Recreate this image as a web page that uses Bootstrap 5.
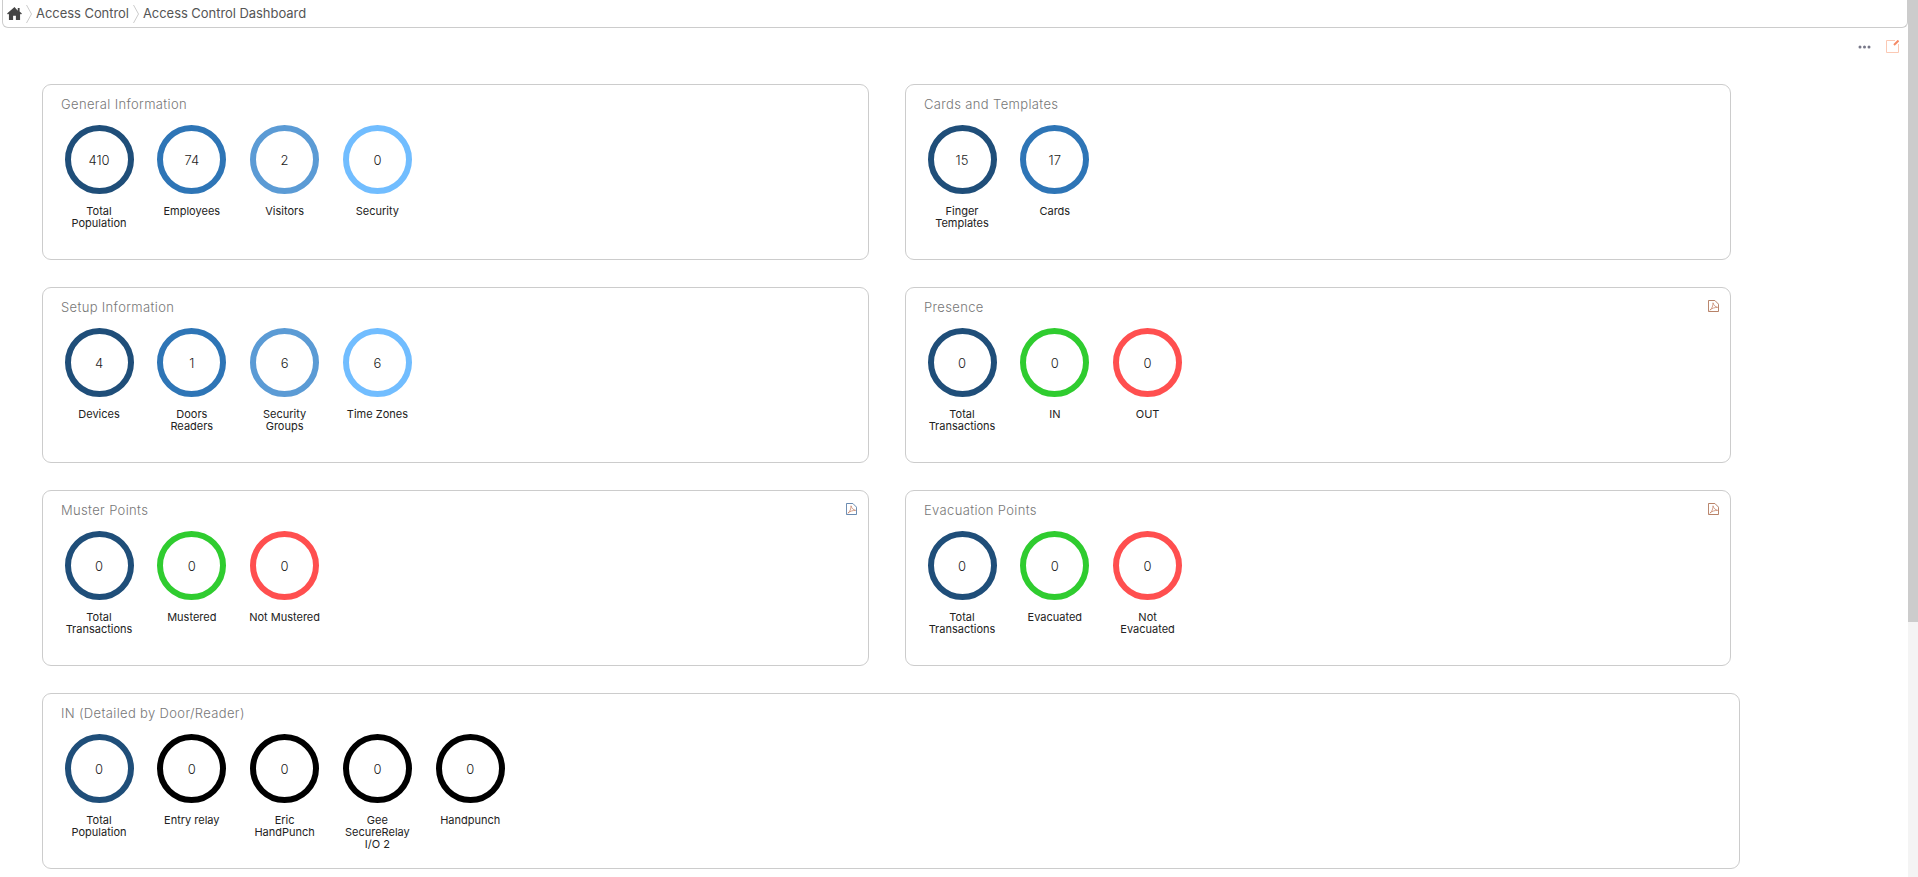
<!DOCTYPE html>
<html lang="en">
<head>
    <meta charset="UTF-8">
    <meta name="viewport" content="width=device-width, initial-scale=1.0">
    <title>Access Control Dashboard</title>
    <link href="https://cdn.jsdelivr.net/npm/bootstrap@5.3.0/dist/css/bootstrap.min.css" rel="stylesheet">
    <style>
        html, body { height: 100%; overflow: hidden; }
        body { font-family: Inter, "Open Sans", sans-serif; background: #fff; }
        .page-shell { height: 877px; }
        .page-main { flex: 1 1 auto; min-width: 0; }
        .fake-scroll { width: 10px; background: #f4f4f4; flex: none; }
        .fake-thumb { height: 622px; background: #ccc; }
        .crumb-bar { height: 28px; margin-left: 2px; border: 1px solid #ccc; border-top: 0; border-radius: 0 0 6px 6px; padding-left: 4px; color: #555; font-size: 13px; letter-spacing: -.05px; }
        .crumb-sep { margin: 0 4px; }
        .tool-row { height: 37px; padding-right: 9px; gap: 15px; }
        .dash-wrap { padding: 19px 0 0 42px; width: 1740px; }
        .panel-grid { display: grid; grid-template-columns: 827px 826px; column-gap: 36px; row-gap: 27px; }
        .dash-panel { height: 176px; position: relative; border: 1px solid #ccc; border-radius: 9px; padding: 10px 18px 0 18px; }
        .panel-wide { grid-column: 1 / 3; width: 1698px; }
        .panel-title { color: #777; font-size: 13px; line-height: 18px; font-weight: 300; letter-spacing: .35px; margin: 0 0 12px; }
        .ring-row { margin-left: -8.4px; }
        .ring-item { width: 92.8px; font-size: 11px; line-height: 12px; color: #222; text-align: center; }
        .ring-item span { display: block; max-width: 73px; margin: 0 auto; }
        .ring { width: 69px; height: 69px; border-radius: 50%; border: 6px solid #000; margin: 0 auto 11px; font-size: 13px; font-weight: 300; color: #222; }
        .ring-navy { border-color: #1f4e79; }
        .ring-blue { border-color: #2e75b6; }
        .ring-mid { border-color: #5b9bd5; }
        .ring-sky { border-color: #71bdff; }
        .ring-green { border-color: #2fcc2f; }
        .ring-red { border-color: #ff4f4f; }
        .pdf-icon { position: absolute; top: 12px; right: 11px; }
    </style>
</head>
<body>
    <div class="page-shell d-flex">
        <div class="page-main">
            <div class="crumb-bar d-flex align-items-center">
                <svg width="15" height="13" viewBox="0 0 16 14"><path fill="#444" d="M8 0 0 7l1 1 1-.8V14h4.500V9.500h3V14H14V7.200l1 .8 1-1-2.500-2.200V1h-2v3L8 0z"/></svg>
                <svg class="crumb-sep" width="6" height="20" viewBox="0 0 6 20"><path fill="none" stroke="#ccc" d="m.5 1 5 9-5 9"/></svg>
                <span>Access Control</span>
                <svg class="crumb-sep" width="6" height="20" viewBox="0 0 6 20"><path fill="none" stroke="#ccc" d="m.5 1 5 9-5 9"/></svg>
                <span>Access Control Dashboard</span>
            </div>
            <div class="tool-row d-flex justify-content-end align-items-center">
                <svg width="13" height="4" viewBox="0 0 13 4"><g fill="#778"><circle cx="2" cy="2" r="1.500"/><circle cx="6.500" cy="2" r="1.500"/><circle cx="11" cy="2" r="1.500"/></g></svg>
                <svg width="13" height="13" viewBox="0 0 13 13"><path fill="none" stroke="#fbc9b4" d="M9 .5H.5v12h12V4"/><path stroke="#f58a66" stroke-width="2" d="m8 5 4.500-4.500"/></svg>
            </div>
            <div class="dash-wrap">
                <div class="panel-grid" id="panels"></div>
            </div>
        </div>
        <div class="fake-scroll"><div class="fake-thumb"></div></div>
    </div>

    <script>
        const pdf = '<svg class="pdf-icon" width="11" height="12" viewBox="0 0 12 13"><path fill="none" stroke="COLOR" d="M.5.500h7l4 4v8H.5z"/><path fill="none" stroke="#c98a70" stroke-width=".9" d="M2 11c2.500-1.500 3.500-5 3.500-8 .5 2.500 2.500 4.500 5 5-3 0-6 .8-8.500 3z"/></svg>';
        const panels = [
            { title: 'General Information', items: [['410', 'Total Population', 'navy'], ['74', 'Employees', 'blue'], ['2', 'Visitors', 'mid'], ['0', 'Security', 'sky']] },
            { title: 'Cards and Templates', items: [['15', 'Finger Templates', 'navy'], ['17', 'Cards', 'blue']] },
            { title: 'Setup Information', items: [['4', 'Devices', 'navy'], ['1', 'Doors Readers', 'blue'], ['6', 'Security Groups', 'mid'], ['6', 'Time Zones', 'sky']] },
            { title: 'Presence', pdf: '#b0765a', items: [['0', 'Total Transactions', 'navy'], ['0', 'IN', 'green'], ['0', 'OUT', 'red']] },
            { title: 'Muster Points', pdf: '#5b7fa8', items: [['0', 'Total Transactions', 'navy'], ['0', 'Mustered', 'green'], ['0', 'Not Mustered', 'red']] },
            { title: 'Evacuation Points', pdf: '#b0765a', items: [['0', 'Total Transactions', 'navy'], ['0', 'Evacuated', 'green'], ['0', 'Not Evacuated', 'red']] },
            { title: 'IN (Detailed by Door/Reader)', wide: true, items: [['0', 'Total Population', 'navy'], ['0', 'Entry relay', ''], ['0', 'Eric HandPunch', ''], ['0', 'Gee SecureRelay I/O 2', ''], ['0', 'Handpunch', '']] }
        ];
        document.getElementById('panels').innerHTML = panels.map(p => `
            <div class="dash-panel ${p.wide ? 'panel-wide' : ''}">
                ${p.pdf ? pdf.replace('COLOR', p.pdf) : ''}
                <h6 class="panel-title">${p.title}</h6>
                <div class="ring-row d-flex">
                    ${p.items.map(i => `
                        <div class="ring-item">
                            <div class="ring ${i[2] ? 'ring-' + i[2] : ''} d-flex align-items-center justify-content-center">${i[0]}</div>
                            <span>${i[1]}</span>
                        </div>`).join('')}
                </div>
            </div>`).join('');
    </script>
    <script src="https://cdn.jsdelivr.net/npm/bootstrap@5.3.0/dist/js/bootstrap.bundle.min.js"></script>
</body>
</html>
